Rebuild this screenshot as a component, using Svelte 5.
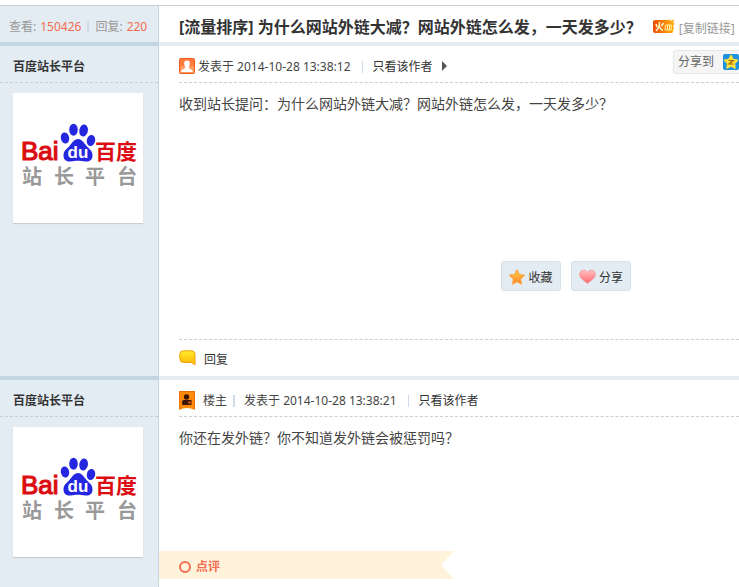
<script>
  const author = '百度站长平台';
  const posts = [
    {
      id: 1,
      time: '2014-10-28 13:38:12',
      text: '收到站长提问：为什么网站外链大减？网站外链怎么发，一天发多少？'
    },
    {
      id: 2,
      time: '2014-10-28 13:38:21',
      text: '你还在发外链？你不知道发外链会被惩罚吗？'
    }
  ];
</script>

{#snippet avatar()}
  <a class="avatar" href="#author" aria-label={author}>
    <svg viewBox="0 0 130 130" width="130" height="130">
      <g fill="#2527e0">
        <ellipse cx="52" cy="45" rx="4.2" ry="5.5" transform="rotate(-12 52 45)" />
        <ellipse cx="60.5" cy="36.7" rx="4.3" ry="6" />
        <ellipse cx="70.6" cy="37.5" rx="4.3" ry="6" transform="rotate(10 70.6 37.5)" />
        <ellipse cx="78" cy="47.500" rx="4.2" ry="5.5" transform="rotate(12 78 47.5)" />
        <path d="M65 46C61 46 59 50 56.500 53C54 56 50.500 57.500 50.500 62.500C50.500 67 53.500 68.800 57.500 68.500C60.500 68.200 62.500 67.700 65 67.700C67.500 67.700 69.500 68.300 72.500 68.500C76.500 68.800 79.500 67 79.500 62.500C79.500 57.500 76 56 73.500 53C71 50 69 46 65 46Z" />
      </g>
      <text class="bai" x="8" y="67">Bai</text>
      <text class="du" x="65" y="65">du</text>
      <text class="cn" x="82" y="66">百度</text>
      <g class="sub">
        <text x="19" y="91">站</text>
        <text x="51" y="91">长</text>
        <text x="82" y="91">平</text>
        <text x="114" y="91">台</text>
      </g>
    </svg>
  </a>
{/snippet}

<main class="thread">
  <header class="row head">
    <div class="side stats">
      <span>查看:</span><b>150426</b><i class="bar"></i><span>回复:</span><b>220</b>
    </div>
    <div class="main title">
      <h1>[流量排序] 为什么网站外链大减？网站外链怎么发，一天发多少？</h1>
      <svg class="hot" width="22" height="15" viewBox="0 0 22 15" aria-hidden="true">
        <defs>
          <linearGradient id="fire" x2="1" y2="0"><stop stop-color="#f04c05" /><stop offset="1" stop-color="#ffb711" /></linearGradient>
        </defs>
        <path d="M2 1H15L17 0L16.500 2L21.500 0.500L20 4L22 4.500L20 7L21 9L19.500 14H2Q0 14 0 12V3Q0 1 2 1Z" fill="url(#fire)" />
        <path d="M6.500 3Q7 8 3 12M6 7Q8 11 10 11.500M3 5L4 8M10.500 4L8.500 7" fill="none" stroke="#fffbd0" stroke-width="1.500" />
        <path d="M13 6H18.500L18 11H12L12.500 6M14.500 6V11M16.500 6V11" fill="none" stroke="#fff3a5" />
      </svg>
      <a class="copy" href="#copy">[复制链接]</a>
    </div>
  </header>

  {#each posts as post (post.id)}
    <article class="row post">
      <aside class="side">
        <div class="name"><a href="#author">{author}</a></div>
        {@render avatar()}
      </aside>
      <section class="main">
        <div class="meta">
          {#if post.id === 1}
            <svg class="face" width="16" height="16" viewBox="0 0 16 16" aria-hidden="true">
              <rect x=".5" y=".5" width="15" height="15" rx="1" fill="#ff9a5c" stroke="#f05a1c" />
              <rect x="1" y="1" width="14" height="7" fill="#ff7a3c" />
              <path d="M8 2.500C10.200 2.500 11 4 10.800 6C10.600 8 9.800 8.500 9.800 9.800C10 11 13.500 11 14 14H2C2.500 11 6 11 6.200 9.800C6.200 8.500 5.400 8 5.200 6C5 4 5.800 2.500 8 2.500Z" fill="#fff" />
            </svg>
          {:else}
            <svg class="owner" width="16" height="19" viewBox="0 0 16 19" aria-hidden="true">
              <path d="M0 0H16V19Q8 15 0 19Z" fill="#ff8a0c" />
              <path d="M.5 18V.5H15.500V18" fill="none" stroke="#e9720a" />
              <circle cx="7.500" cy="6" r="2.700" fill="#3b1706" />
              <path d="M3 13V11Q3 9 5 9H12.500V14H4Q3 14 3 13Z" fill="#3b1706" />
              <circle cx="10.500" cy="11.500" r="1.500" fill="#c54a08" />
            </svg>
            <span class="role">楼主</span><i class="bar"></i>
          {/if}
          <span class="time">发表于 {post.time}</span>
          <i class="bar wide"></i>
          <a href="#only">只看该作者</a>
          {#if post.id === 1}
            <svg class="arrow" width="5" height="10" viewBox="0 0 5 10" aria-hidden="true"><path d="M0 0L5 5L0 10Z" fill="#555" /></svg>
            <div class="shareto">
              <span>分享到</span>
              <a href="#qzone" aria-label="QQ空间">
                <svg width="16" height="16" viewBox="0 0 16 16">
                  <rect width="16" height="16" rx="2" fill="#1b91e0" />
                  <path d="M8 1.500L10 5.600L14.500 6.200L11.300 9.400L12 14L8 11.800L4 14L4.700 9.400L1.500 6.200L6 5.600Z" fill="#ffdf3a" stroke="#ffdf3a" stroke-width="1.500" stroke-linejoin="round" />
                  <path d="M5.500 6.500H10.200L6 10H10.700" fill="none" stroke="#a16b00" stroke-width="1.200" />
                </svg>
              </a>
            </div>
          {/if}
        </div>
        <p class="text">{post.text}</p>
        {#if post.id === 1}
          <div class="actions">
            <button type="button">
              <svg width="16" height="16" viewBox="0 0 16 16" aria-hidden="true">
                <defs><linearGradient id="star" x2="0" y2="1"><stop stop-color="#ffda45" /><stop offset="1" stop-color="#ff7c2a" /></linearGradient></defs>
                <path d="M8 1L10.100 5.500L15.200 6.200L11.500 9.800L12.400 15L8 12.600L3.600 15L4.500 9.800L.8 6.200L5.900 5.500Z" fill="url(#star)" stroke="#f9a13a" stroke-width="1.200" stroke-linejoin="round" />
              </svg><span>收藏</span>
            </button>
            <button type="button">
              <svg width="17" height="16" viewBox="0 0 17 16" aria-hidden="true">
                <defs><linearGradient id="heart" x2="0" y2="1"><stop stop-color="#ffc0c0" /><stop offset="1" stop-color="#ff6a70" /></linearGradient></defs>
                <path d="M8.500 14.500C6 12 .7 9.500 .7 5.200C.7 2.700 2.500 1.200 4.600 1.200C6.500 1.200 7.800 2.300 8.500 3.700C9.200 2.300 10.500 1.200 12.400 1.200C14.500 1.200 16.300 2.700 16.300 5.200C16.300 9.500 11 12 8.500 14.500Z" fill="url(#heart)" stroke="#f58a90" stroke-width=".7" />
              </svg><span>分享</span>
            </button>
          </div>
          <div class="foot">
            <svg width="17" height="16" viewBox="0 0 17 16" aria-hidden="true">
              <defs><linearGradient id="bubble" x2="0" y2="1"><stop stop-color="#ffea2e" /><stop offset="1" stop-color="#ffb400" /></linearGradient></defs>
              <path d="M4.500 .8H12.500Q16 .8 16 4.500V15L12.500 12.500H4.500Q.8 12.500 .8 8.500V4.500Q.8 .8 4.500 .8Z" fill="url(#bubble)" stroke="#f0a010" />
            </svg>
            <a href="#reply">回复</a>
          </div>
        {:else}
          <h3 class="comment">
            <svg width="12" height="12" viewBox="0 0 12 12" aria-hidden="true"><circle cx="6" cy="6" r="5" fill="none" stroke="#f26c4f" stroke-width="2" /></svg>
            点评
          </h3>
        {/if}
      </section>
    </article>
  {/each}
</main>

<style>
  :global(body) {
    margin: 0;
    background: #fff;
  }
  .thread {
    box-sizing: border-box;
    min-height: 100vh;
    padding-top: 5px;
    display: flex;
    flex-direction: column;
    overflow: hidden;
    font: 12px/18px "Noto Sans", "Noto Sans CJK SC", sans-serif;
    color: #444;
  }
  a {
    color: #333;
    text-decoration: none;
  }
  .row {
    display: grid;
    grid-template-columns: 159px minmax(0, 1fr);
  }
  .head {
    border-top: 1px solid #cdcdcd;
  }
  .side {
    box-sizing: border-box;
    background: #e4ecf3;
    border-right: 1px solid #c2d5e3;
  }
  .stats,
  .title {
    display: flex;
    align-items: center;
    height: 36px;
    padding-top: 6px;
    box-sizing: border-box;
    white-space: nowrap;
  }
  .stats {
    padding-left: 9px;
    color: #999;
  }
  .stats b {
    margin-left: 4px;
    font-weight: 400;
    color: #f26c4f;
  }
  .bar {
    width: 2px;
    height: 12px;
    margin: 0 6px;
    background: #cfdaea;
  }
  .title {
    padding-left: 20px;
  }
  h1 {
    margin: 0;
    font-size: 16px;
    line-height: 24px;
    font-weight: 700;
    color: #333;
  }
  .hot {
    flex: none;
    margin: 0 4px 2px 11px;
  }
  .copy {
    padding-top: 4px;
    color: #999;
  }
  .post .side,
  .post .main {
    border-top: 4px solid #e5edf2;
  }
  .post .side {
    border-top-color: #c2d5e3;
  }
  .post:last-child {
    flex: 1;
  }
  .name {
    height: 36px;
    padding-left: 13px;
    border-bottom: 1px dashed #cdcdcd;
    line-height: 42px;
    font-weight: 700;
  }
  .avatar {
    display: block;
    width: 130px;
    height: 130px;
    margin: 10px 0 0 13px;
    background: #fff;
    box-shadow: 0 1px 1px #ccc;
  }
  .avatar svg {
    display: block;
  }
  .bai {
    font: 26px "Liberation Sans", sans-serif;
    fill: #dc0d12;
    stroke: #dc0d12;
    stroke-width: 1.2px;
  }
  .du {
    font: 700 17px "Liberation Sans", sans-serif;
    fill: #fff;
    text-anchor: middle;
  }
  .cn {
    font: 700 21px "Liberation Sans", "Noto Sans CJK SC", sans-serif;
    fill: #dc0d12;
  }
  .sub {
    font: 700 20px "Liberation Sans", "Noto Sans CJK SC", sans-serif;
    fill: #999;
    text-anchor: middle;
  }
  .post .main {
    display: flex;
    flex-direction: column;
  }
  .meta {
    display: flex;
    align-items: center;
    height: 36px;
    margin-left: 20px;
    border-bottom: 1px dashed #cdcdcd;
    white-space: nowrap;
  }
  .meta > svg {
    flex: none;
    margin-top: 4px;
  }
  .meta > span,
  .meta > a,
  .meta > .bar {
    margin-top: 5px;
  }
  .face {
    margin-right: 3px;
  }
  .owner {
    margin-right: 8px;
  }
  .role + .bar {
    margin-right: 9px;
  }
  .bar.wide {
    width: 1px;
    margin-left: 11px;
    margin-right: 10px;
  }
  .arrow {
    margin-left: 9px;
  }
  .shareto {
    display: flex;
    align-items: center;
    box-sizing: border-box;
    height: 24px;
    margin: -4px 0 0 auto;
    padding-left: 4px;
    border: 1px solid #e6e6e6;
    border-right: 0;
    border-radius: 3px 0 0 3px;
    background: #f5f5f5;
    color: #666;
  }
  .shareto a {
    margin-left: 9px;
  }
  .shareto svg {
    display: block;
  }
  .text {
    margin: 9px 0 0 20px;
    font-size: 14px;
    line-height: 22px;
    font-family: "Noto Sans CJK SC", sans-serif;
  }
  .actions {
    display: flex;
    justify-content: center;
    gap: 10px;
    margin: 147px 0 48px 20px;
    padding-left: 214px;
  }
  button {
    display: flex;
    align-items: center;
    justify-content: center;
    gap: 3px;
    box-sizing: border-box;
    width: 60px;
    height: 30px;
    padding: 2px 0 0;
    border: 1px solid #d6e2ea;
    border-radius: 3px;
    background: #e4ecf3;
    color: #333;
    font: inherit;
  }
  button span {
    padding-top: 2px;
  }
  .foot {
    display: flex;
    align-items: center;
    gap: 8px;
    height: 36px;
    margin-left: 20px;
    border-top: 1px dashed #cdcdcd;
  }
  .foot a {
    padding-top: 4px;
  }
  .comment {
    display: flex;
    align-items: center;
    gap: 5px;
    box-sizing: border-box;
    width: 295px;
    height: 28px;
    margin: auto 0 8px;
    padding: 3px 0 0 20px;
    background: #fff3dc;
    clip-path: polygon(0 0, 100% 0, 282px 50%, 100% 100%, 0 100%);
    font-size: 12px;
    line-height: 18px;
    color: #f26c4f;
  }
</style>
